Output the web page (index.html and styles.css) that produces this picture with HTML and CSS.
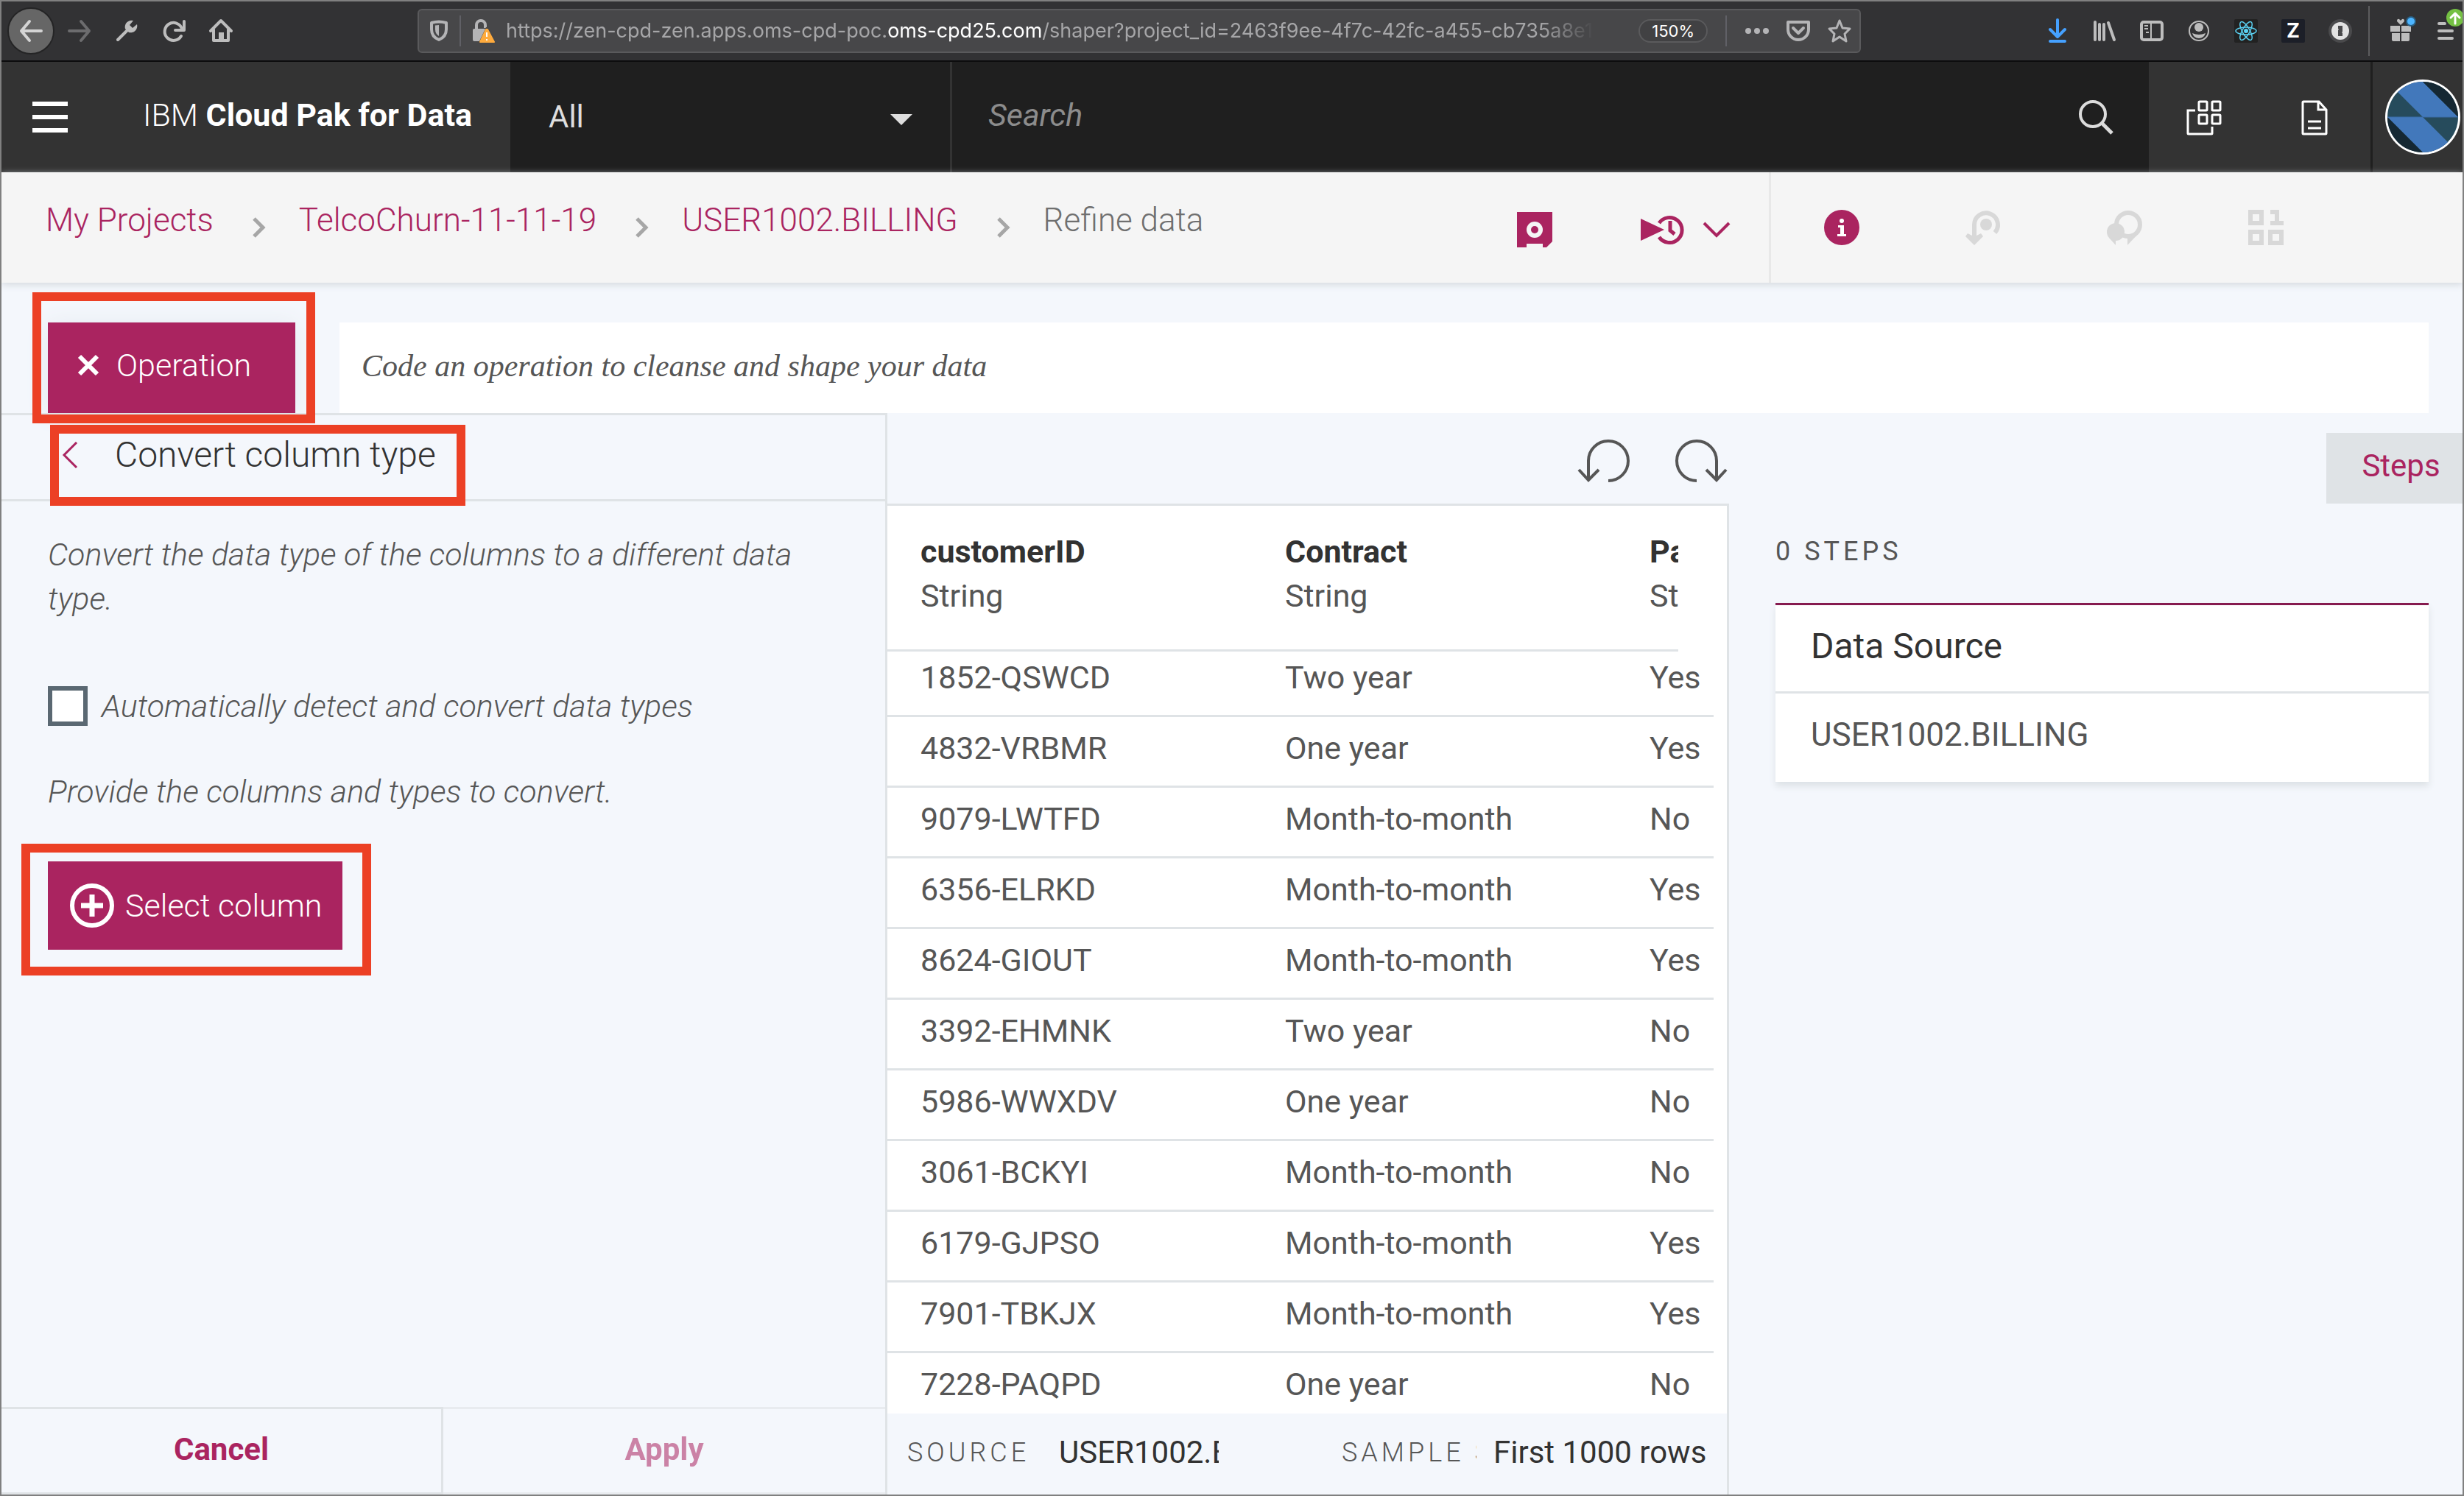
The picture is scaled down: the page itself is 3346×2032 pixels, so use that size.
FILE: index.html
```html
<!DOCTYPE html>
<html lang="en">
<head>
<meta charset="utf-8">
<meta name="viewport" content="width=device-width, initial-scale=1">
<title>Refine data - IBM Cloud Pak for Data</title>
<link rel="stylesheet" href="styles.css">
</head>
<body>
<div class="browser">
  <nav class="browser-group browser-nav" aria-label="Browser">
    <button class="tool tool-back" aria-label="Back"><svg width="32" height="32" viewBox="0 0 32 32"><path d="M30 16H3M14 3L3 16l11 13" fill="none" stroke="#d4d4d4" stroke-width="4" stroke-linecap="round" stroke-linejoin="round"/></svg></button>
    <button class="tool" aria-label="Forward"><svg width="32" height="32" viewBox="0 0 32 32"><path d="M2 16h27M18 3l11 13-11 13" fill="none" stroke="#6c6c6e" stroke-width="4" stroke-linecap="round" stroke-linejoin="round"/></svg></button>
    <button class="tool" aria-label="Tools"><svg width="32" height="32" viewBox="0 0 32 32"><path d="M4 28L18 14" fill="none" stroke="#bdbdbd" stroke-width="4" stroke-linecap="round"/><path d="M25 2a9 9 0 0 0-11 11l5 5A9 9 0 0 0 30 7l-6 5-4-4z" fill="#bdbdbd"/></svg></button>
    <button class="tool" aria-label="Reload"><svg width="32" height="32" viewBox="0 0 32 32"><path d="M27 13A12 12 0 1 0 26 23" fill="none" stroke="#bdbdbd" stroke-width="4" stroke-linecap="round"/><path d="M30 3v12H18" fill="none" stroke="#bdbdbd" stroke-width="4" stroke-linecap="round" stroke-linejoin="round"/></svg></button>
    <button class="tool" aria-label="Home"><svg width="34" height="34" viewBox="0 0 34 34"><path d="M3 17L17 3l14 14M7 15v15h20V15" fill="none" stroke="#bdbdbd" stroke-width="4" stroke-linecap="round" stroke-linejoin="round"/><path d="M14 30V19h7v11" fill="#bdbdbd"/></svg></button>
  </nav>
  <div class="url-bar">
    <svg class="url-shield" width="26" height="30" viewBox="0 0 26 30"><path d="M3 4q10-3 20 0v9q0 10-10 14Q3 23 3 13z" fill="none" stroke="#b4b4b6" stroke-width="4" stroke-linejoin="round"/><path d="M13 7v15Q8 19 8 13V7.500z" fill="#b4b4b6"/></svg>
    <svg class="url-lock" width="32" height="32" viewBox="0 0 32 32"><path d="M7 14V8a6 6 0 0 1 12 0v4" fill="none" stroke="#b4b4b6" stroke-width="4"/><rect x="2" y="13" width="18" height="17" rx="2" fill="#b4b4b6"/><path d="M20 11L10 32h22L22 11z" fill="#474749"/><path d="M20 14h2l9 17H12z" fill="#ffab3d" stroke="#ffab3d" stroke-width="2" stroke-linejoin="round"/><path d="M21 18v6M21 27v2" stroke="#fff" stroke-width="2"/></svg>
    <span class="url-text">https://zen-cpd-zen.apps.oms-cpd-poc.<b>oms-cpd25.com</b>/shaper?project_id=2463f9ee-4f7c-42fc-a455-cb735a8e1</span>
    <span class="url-zoom">150%</span>
    <span class="url-rule"></span>
    <svg width="34" height="32" viewBox="0 0 34 32" fill="#b4b4b6"><circle cx="5" cy="16" r="4"/><circle cx="17" cy="16" r="4"/><circle cx="29" cy="16" r="4"/></svg>
    <svg width="34" height="30" viewBox="0 0 34 30"><path d="M3 3h28v10a14 14 0 0 1-28 0z" fill="none" stroke="#b4b4b6" stroke-width="4" stroke-linejoin="round"/><path d="M10 11l7 7 7-7" fill="none" stroke="#b4b4b6" stroke-width="4" stroke-linecap="round" stroke-linejoin="round"/></svg>
    <svg width="34" height="34" viewBox="0 0 34 34"><path d="M17 3l4 10 10 1-7 7 2 10-9-6-9 6 2-10-7-7 10-1z" fill="none" stroke="#b4b4b6" stroke-width="3" stroke-linejoin="round"/></svg>
  </div>
  <div class="browser-group browser-extras">
    <button class="tool" aria-label="Downloads"><svg width="26" height="34" viewBox="0 0 26 34"><path d="M13 2v22M3 15l10 10 10-10M3 31h20" fill="none" stroke="#45a1ff" stroke-width="4" stroke-linecap="round" stroke-linejoin="round"/></svg></button>
    <button class="tool" aria-label="Library"><svg width="32" height="32" viewBox="0 0 32 32"><path d="M3 4v24M9 7v21M15 7v21M21 5l8 23" fill="none" stroke="#bdbdbd" stroke-width="4" stroke-linecap="round"/></svg></button>
    <button class="tool" aria-label="Sidebar"><svg width="34" height="30" viewBox="0 0 34 30"><rect x="3" y="3" width="28" height="24" rx="3" fill="none" stroke="#bdbdbd" stroke-width="4"/><path d="M16 3v24M7 8h5M7 12h5M9 17h4" stroke="#bdbdbd" stroke-width="2"/></svg></button>
    <button class="tool" aria-label="Account"><svg width="30" height="30" viewBox="0 0 30 30"><circle cx="15" cy="15" r="13" fill="none" stroke="#bdbdbd" stroke-width="2"/><circle cx="15" cy="10" r="6" fill="#bdbdbd"/><path d="M6 18q9 4 18 0-2 7-9 7t-9-7z" fill="#bdbdbd"/></svg></button>
    <button class="tool" aria-label="React tools"><svg width="32" height="32" viewBox="0 0 32 32"><rect width="32" height="32" rx="2" fill="#222"/><g fill="none" stroke="#5ad1f2" stroke-width="1.500"><ellipse cx="16" cy="16" rx="14" ry="5"/><ellipse cx="16" cy="16" rx="14" ry="5" transform="rotate(60 16 16)"/><ellipse cx="16" cy="16" rx="14" ry="5" transform="rotate(120 16 16)"/></g><circle cx="16" cy="16" r="3" fill="#5ad1f2"/></svg></button>
    <button class="tool" aria-label="Z extension"><span class="tool-z">Z</span></button>
    <button class="tool" aria-label="Passwords"><svg width="32" height="32" viewBox="0 0 32 32"><circle cx="16" cy="16" r="16" fill="#4a4a4c"/><circle cx="16" cy="16" r="12" fill="#e2e2e2"/><path d="M13 9h6v8l-1 1 1 1v4h-6v-8l1-1-1-1z" fill="#4a4a4c"/></svg></button>
    <span class="tools-rule"></span>
    <button class="tool" aria-label="What's new"><svg width="42" height="42" viewBox="0 5 42 42"><path d="M7 19h13v8H7zM22 19h13v8H22zM9 29h11v11H11q-2 0-2-2zM22 29h11v9q0 2-2 2h-9z" fill="#bdbdbd"/><path d="M21 18l-5-5q0-4 3-3l2 2 2-2q3-1 3 3z" fill="#bdbdbd"/><circle cx="35" cy="13" r="7" fill="#2a5e80"/><circle cx="35" cy="13" r="5" fill="#4db5ff"/></svg></button>
    <button class="tool tool-menu" aria-label="Menu"><svg width="36" height="46" viewBox="0 0 36 46"><path d="M4 22h8M4 32h18M4 42h18" stroke="#bdbdbd" stroke-width="4" stroke-linecap="round"/><circle cx="26" cy="14" r="14" fill="#323234"/><circle cx="26" cy="14" r="12" fill="#74c043"/><path d="M26 22V8M20 14l6-6 6 6" fill="none" stroke="#fff" stroke-width="3" stroke-linecap="round" stroke-linejoin="round"/></svg></button>
  </div>
</div>

<header class="app-header">
  <div class="brand">
    <button class="burger" aria-label="Open menu"><svg width="48" height="42" viewBox="0 0 48 42"><path d="M0 3h48M0 21h48M0 39h48" stroke="#fff" stroke-width="6"/></svg></button>
    <a class="brand-name" href="#">IBM <b>Cloud Pak for Data</b></a>
  </div>
  <div class="scope">
    <select class="scope-select" aria-label="Search scope"><option>All</option></select>
    <svg class="scope-arrow" width="30" height="15" viewBox="0 0 30 15"><path d="M0 0h30L15 15z" fill="#dedede"/></svg>
  </div>
  <form class="search">
    <input class="search-input" type="search" placeholder="Search" aria-label="Search">
    <button class="icon-button" type="button" aria-label="Search"><svg width="48" height="48" viewBox="0 0 48 48"><circle cx="20" cy="20" r="17" fill="none" stroke="#dcdcdc" stroke-width="4"/><path d="M32 32l14 14" stroke="#dcdcdc" stroke-width="5"/></svg></button>
  </form>
  <div class="header-tools">
    <button class="icon-button" aria-label="Applications"><svg width="48" height="48" viewBox="0 0 48 48"><g fill="none" stroke="#fff" stroke-width="3"><rect x="17" y="2" width="11" height="12" rx="1"/><rect x="35" y="2" width="11" height="12" rx="1"/><rect x="17" y="20" width="11" height="12" rx="1"/><rect x="35" y="20" width="11" height="12" rx="1"/><path d="M12 14H2v31q0 1 1 1h31q1 0 1-1v-9"/></g></svg></button>
    <button class="icon-button" aria-label="Documents"><svg width="36" height="48" viewBox="0 0 36 48"><g fill="none" stroke="#fff" stroke-width="3"><path d="M3 2h21l10 11v32q0 1-1 1H3q-1 0-1-1V3q0-1 1-1zM23 2v11h11M9 29h18M9 38h18"/></g></svg></button>
  </div>
  <div class="account">
    <button class="icon-button" aria-label="Account"><svg width="102" height="102" viewBox="-51 -51 102 102"><clipPath id="disc"><circle r="48"/></clipPath><circle r="51" fill="#fff"/><g clip-path="url(#disc)"><rect x="-48" y="-48" width="96" height="96" fill="#264b5c"/><path d="M0 0l-48-48H0L48 0zM0 0l48 48H0L-48 0z" fill="#4278bb"/><path d="M0-48h48V0zM-48 0v48H0z" fill="#152833"/><path d="M-48 0h96" stroke="#3a6da8" stroke-width="1"/></g></svg></button>
  </div>
</header>

<div class="sub-header">
  <nav class="crumbs" aria-label="Breadcrumb">
    <a class="crumb" href="#">My Projects</a>
    <svg class="crumb-arrow" width="20" height="28" viewBox="0 0 20 28"><path d="M3 2l12 12L3 26" fill="none" stroke="#a6a6a6" stroke-width="5"/></svg>
    <a class="crumb" href="#">TelcoChurn-11-11-19</a>
    <svg class="crumb-arrow" width="20" height="28" viewBox="0 0 20 28"><path d="M3 2l12 12L3 26" fill="none" stroke="#a6a6a6" stroke-width="5"/></svg>
    <a class="crumb" href="#">USER1002.BILLING</a>
    <svg class="crumb-arrow" width="20" height="28" viewBox="0 0 20 28"><path d="M3 2l12 12L3 26" fill="none" stroke="#a6a6a6" stroke-width="5"/></svg>
    <span class="crumb crumb-current">Refine data</span>
  </nav>
  <div class="flow-tools">
    <button class="icon-button" aria-label="Save"><svg width="48" height="48" viewBox="0 0 48 48"><path d="M0 0h48v40l-8 8h-5v-5H13v5H0z" fill="#aa2460"/><circle cx="24" cy="24" r="11" fill="#f5f5f5"/><circle cx="24" cy="24" r="5" fill="#aa2460"/></svg></button>
    <button class="icon-button run-button" aria-label="Run or schedule"><svg width="60" height="40" viewBox="0 0 60 40"><path d="M0 5l32 15L0 35z" fill="#aa2460"/><path d="M25 11a17 17 0 1 1 0 19" fill="none" stroke="#aa2460" stroke-width="5"/><path d="M40 8v13l6 5" fill="none" stroke="#aa2460" stroke-width="5"/></svg><svg width="38" height="24" viewBox="0 0 38 24"><path d="M2 3l17 17L36 3" fill="none" stroke="#aa2460" stroke-width="4"/></svg></button>
  </div>
  <div class="info-tools">
    <button class="icon-button" aria-label="Information"><svg width="48" height="48" viewBox="0 0 48 48"><circle cx="24" cy="24" r="24" fill="#aa2460"/><circle cx="24" cy="15" r="3" fill="#fff"/><path d="M19 21h8v12h3v3H18v-3h4v-9h-3z" fill="#fff"/></svg></button>
    <button class="icon-button" aria-label="Visualizations" disabled><svg width="48" height="48" viewBox="0 0 48 48"><path d="M12 40V20a16 16 0 1 1 28 11" fill="none" stroke="#d8d8d8" stroke-width="6"/><circle cx="28" cy="20" r="8" fill="#d8d8d8"/><path d="M0 36l3-4 6 3h6l6-3 3 4-12 12z" fill="#d8d8d8"/></svg></button>
    <button class="icon-button" aria-label="Comments" disabled><svg width="48" height="48" viewBox="0 0 48 48"><circle cx="29" cy="20" r="16" fill="none" stroke="#d8d8d8" stroke-width="6"/><path d="M44 31L28 48V36z" fill="#d8d8d8"/><circle cx="12" cy="30" r="12" fill="#d8d8d8"/><path d="M3 38l9 10v-7z" fill="#d8d8d8"/></svg></button>
    <button class="icon-button" aria-label="Data" disabled><svg width="48" height="48" viewBox="0 0 48 48"><g fill="none" stroke="#d8d8d8" stroke-width="6"><path d="M3 3h15v15H3zM3 30h15v15H3zM30 30h15v15H30zM30 3h9v15M30 18h18"/></g></svg></button>
  </div>
</div>

<main class="workspace">
  <div class="command-row">
    <div class="marked marked-operation">
      <button class="primary operation-button"><svg width="30" height="30" viewBox="0 0 30 30"><path d="M3 3l24 24M27 3L3 27" stroke="#fff" stroke-width="6"/></svg>Operation</button>
    </div>
    <input class="code-input" type="text" placeholder="Code an operation to cleanse and shape your data" aria-label="Code an operation">
  </div>

  <div class="columns">
    <section class="operation-panel">
      <div class="panel-title marked marked-title">
        <button class="icon-button" aria-label="Back to operations"><svg width="22" height="36" viewBox="0 0 22 36"><path d="M20 1L3 18l17 17" fill="none" stroke="#aa2460" stroke-width="3"/></svg></button>
        <h1>Convert column type</h1>
      </div>
      <div class="panel-body">
        <p class="hint">Convert the data type of the columns to a different data type.</p>
        <label class="check"><input class="check-box" type="checkbox"> Automatically detect and convert data types</label>
        <p class="hint">Provide the columns and types to convert.</p>
        <div class="marked marked-select">
          <button class="primary select-button"><svg width="60" height="60" viewBox="0 0 60 60"><circle cx="30" cy="30" r="27" fill="none" stroke="#fff" stroke-width="6"/><path d="M30 15v30M15 30h30" stroke="#fff" stroke-width="7"/></svg>Select column</button>
        </div>
      </div>
      <div class="panel-actions">
        <button class="action">Cancel</button>
        <button class="action action-apply" disabled>Apply</button>
      </div>
    </section>

    <section class="preview">
      <div class="history">
        <button class="icon-button" aria-label="Undo"><svg width="72" height="60" viewBox="0 0 72 60"><path d="M42 57a27 27 0 1 0-27-27v26M2 42l13 14 14-14" fill="none" stroke="#565656" stroke-width="4"/></svg></button>
        <button class="icon-button" aria-label="Redo"><svg width="72" height="60" viewBox="0 0 72 60"><path d="M30 57a27 27 0 1 1 27-27v26M70 42L57 56 43 42" fill="none" stroke="#565656" stroke-width="4"/></svg></button>
      </div>
      <div class="grid">
        <div class="grid-scroll">
          <table>
            <thead>
              <tr>
                <th scope="col"><div class="col-head">customerID<span>String</span></div></th>
                <th scope="col"><div class="col-head">Contract<span>String</span></div></th>
                <th scope="col"><div class="col-head col-head-cut">Pa<span>St</span></div></th>
              </tr>
            </thead>
            <tbody>
              <tr><td>1852-QSWCD</td><td>Two year</td><td>Yes</td></tr>
              <tr><td>4832-VRBMR</td><td>One year</td><td>Yes</td></tr>
              <tr><td>9079-LWTFD</td><td>Month-to-month</td><td>No</td></tr>
              <tr><td>6356-ELRKD</td><td>Month-to-month</td><td>Yes</td></tr>
              <tr><td>8624-GIOUT</td><td>Month-to-month</td><td>Yes</td></tr>
              <tr><td>3392-EHMNK</td><td>Two year</td><td>No</td></tr>
              <tr><td>5986-WWXDV</td><td>One year</td><td>No</td></tr>
              <tr><td>3061-BCKYI</td><td>Month-to-month</td><td>No</td></tr>
              <tr><td>6179-GJPSO</td><td>Month-to-month</td><td>Yes</td></tr>
              <tr><td>7901-TBKJX</td><td>Month-to-month</td><td>Yes</td></tr>
              <tr><td>7228-PAQPD</td><td>One year</td><td>No</td></tr>
            </tbody>
          </table>
        </div>
        <div class="grid-footer">
          <span class="label source-label">SOURCE</span>
          <span class="value source-value">USER1002.B</span>
          <span class="label sample-label">SAMPLE S</span>
          <span class="value">First 1000 rows</span>
        </div>
      </div>
    </section>

    <aside class="steps">
      <button class="steps-tab">Steps</button>
      <h2 class="label steps-count">0 STEPS</h2>
      <div class="step-card">
        <h3>Data Source</h3>
        <p>USER1002.BILLING</p>
      </div>
    </aside>
  </div>
</main>
</body>
</html>
```

FILE: styles.css
```css
*,
*::before,
*::after {
  box-sizing: border-box;
}

:root {
  --brand: #aa2460;
  --line: #dfe3e6;
  --canvas: #f4f7fc;
  --text: #565656;
  --text-strong: #323232;
  --mark: #ec4025;
}

body {
  display: flex;
  flex-direction: column;
  min-height: 100vh;
  margin: 0;
  border: 2px solid #808080;
  background: var(--canvas);
  color: var(--text);
  font: 42px/60px Roboto, "Liberation Sans", sans-serif;
  overflow-x: hidden;
}

button,
input,
select {
  margin: 0;
  padding: 0;
  border: 0;
  border-radius: 0;
  background: none;
  color: inherit;
  font: inherit;
}

a {
  color: inherit;
  text-decoration: none;
}

h1,
h2,
h3,
p {
  margin: 0;
  font-size: inherit;
  font-weight: 400;
}

svg {
  display: block;
  flex: none;
}

.icon-button {
  display: flex;
  align-items: center;
}

/* Browser toolbar */

.browser {
  display: flex;
  align-items: center;
  justify-content: space-between;
  height: 82px;
  border-bottom: 2px solid #0c0c0d;
  background: #323234;
}

.browser-group {
  display: flex;
  align-items: center;
}

.browser-nav {
  padding-left: 8px;
}

.tool {
  display: flex;
  align-items: center;
  justify-content: center;
  width: 64px;
  height: 64px;
}

.tool-back {
  margin-right: 2px;
  border: 2px solid #242425;
  border-radius: 50%;
  background: #666;
}

.tool-menu {
  justify-content: flex-start;
  align-items: flex-start;
  width: 52px;
  padding-left: 16px;
}

.tool-z {
  width: 32px;
  border-radius: 2px;
  background: #1c1f28;
  color: #fff;
  font: 700 27px/32px Inter, sans-serif;
}

.tools-rule {
  width: 2px;
  height: 68px;
  margin: 0 10px 0 6px;
  background: #5c5c5e;
}

.url-bar {
  display: flex;
  align-items: center;
  width: 1960px;
  height: 60px;
  padding: 0 10px 0 14px;
  border: 2px solid #5a5a5c;
  border-radius: 6px;
  background: #474749;
  color: #a6a6a8;
  font: 27px/40px Inter, sans-serif;
}

.url-lock {
  width: 48px;
  height: 42px;
  margin-left: 15px;
  padding: 5px 0 5px 14px;
  border-left: 2px solid #606066;
}

.url-text {
  flex: 1;
  margin: 0 60px 0 15px;
  overflow: hidden;
  white-space: nowrap;
  -webkit-mask-image: linear-gradient(90deg, #000 95%, transparent);
  mask-image: linear-gradient(90deg, #000 95%, transparent);
}

.url-text b {
  color: #fff;
  font-weight: 400;
}

.url-zoom {
  padding: 0 16px;
  border: 2px solid #5a5a5c;
  border-radius: 16px;
  background: #414143;
  color: #fff;
  font-size: 22px;
  line-height: 28px;
}

.url-rule {
  width: 2px;
  height: 42px;
  margin: 0 24px;
  background: #606066;
}

.url-rule + svg + svg,
.url-rule + svg + svg + svg {
  margin-left: 22px;
}

/* Application header */

.app-header {
  display: flex;
  height: 150px;
  background: #1f1f1f;
  color: #f0f0f0;
}

.brand {
  display: flex;
  align-items: center;
  width: 691px;
  padding-left: 42px;
  gap: 102px;
  background: #333;
}

.brand-name {
  padding-bottom: 6px;
  font-size: 43px;
  font-weight: 300;
  color: #fff;
  white-space: nowrap;
}

.brand-name b {
  font-weight: 700;
}

.scope {
  display: flex;
  align-items: center;
  width: 600px;
  border-right: 3px solid #333;
}

.scope-select {
  flex: 1;
  height: 150px;
  padding-left: 52px;
  appearance: none;
  color: #dedede;
}

.scope-arrow {
  margin: 6px 51px 0 -81px;
  pointer-events: none;
}

.search {
  display: flex;
  flex: 1;
  align-items: center;
  padding: 0 48px 0 49px;
}

.search-input {
  flex: 1;
  height: 150px;
  padding-bottom: 6px;
  font-size: 43px;
}

.search-input::placeholder {
  color: #8c8c8c;
  font-style: italic;
  opacity: 1;
}

.header-tools {
  display: flex;
  align-items: center;
  gap: 108px;
  padding: 2px 58px 0 51px;
  background: #333;
}

.account {
  display: flex;
  align-items: center;
  width: 125px;
  padding-left: 17px;
  border-left: 3px solid #1f1f1f;
  background: #333;
}

/* Breadcrumb bar */

.sub-header {
  position: relative;
  display: flex;
  height: 150px;
  background: #f5f5f5;
  box-shadow: 0 3px 9px #d5dadf;
}

.crumbs {
  display: flex;
  flex: 1;
  align-items: center;
  padding-left: 60px;
}

.crumb {
  padding-bottom: 20px;
  color: var(--brand);
  font-size: 44px;
  font-weight: 300;
  white-space: nowrap;
}

.crumb-current {
  color: #6f6f6f;
}

.crumb-arrow {
  margin: 0 44px 0 52px;
}

.flow-tools {
  display: flex;
  align-items: center;
  gap: 120px;
  padding: 6px 52px 0 0;
  border-right: 3px solid #e8e8e8;
}

.run-button {
  gap: 24px;
}

.info-tools {
  display: flex;
  align-items: center;
  gap: 144px;
  width: 939px;
  padding-left: 72px;
}

/* Command row */

.workspace {
  display: flex;
  flex: 1;
  flex-direction: column;
}

.command-row {
  display: flex;
  gap: 60px;
  padding: 54px 46px 0 63px;
}

.primary {
  display: flex;
  align-items: center;
  background: var(--brand);
  color: #fff;
  font-size: 43px;
  font-weight: 300;
}

.operation-button {
  gap: 23px;
  width: 336px;
  height: 123px;
  padding: 0 0 7px 40px;
  box-shadow: 0 3px 30px #e4e9ef;
}

.code-input {
  flex: 1;
  height: 123px;
  padding: 0 30px 6px;
  background: #fff;
  font-family: "Liberation Serif", serif;
}

.code-input::placeholder {
  color: var(--text);
  font-style: italic;
  opacity: 1;
}

/* Red call-out frames */

.marked {
  position: relative;
}

.marked::after {
  position: absolute;
  z-index: 1;
  border: 12px solid var(--mark);
  content: "";
  pointer-events: none;
}

.marked-operation::after {
  inset: -41px -27px -14px -21px;
}

.marked-title::after {
  top: 13px;
  left: 66px;
  width: 564px;
  height: 110px;
}

.marked-select::after {
  inset: -24px -39px -35px -36px;
}

/* Columns */

.columns {
  display: grid;
  flex: 1;
  grid-template-columns: 1203fr 1143fr 996fr;
}

.operation-panel {
  display: flex;
  flex-direction: column;
  min-width: 0;
}

.panel-title {
  display: flex;
  align-items: center;
  height: 120px;
  padding: 0 0 6px 82px;
  border: 3px solid var(--line);
  border-left: 0;
  color: var(--text-strong);
  font-size: 48px;
}

.panel-title h1 {
  font-weight: 300;
}

.panel-title .icon-button {
  margin-right: 50px;
}

.panel-body {
  display: flex;
  flex: 1;
  flex-direction: column;
  align-items: flex-start;
  padding: 42px 63px 0;
  border-right: 3px solid var(--line);
}

.hint,
.check {
  font-size: 43px;
  font-style: italic;
  font-weight: 300;
}

.check {
  display: flex;
  align-items: center;
  gap: 19px;
  margin: 86px 0 56px;
}

.check-box {
  width: 54px;
  height: 54px;
  border: 6px solid #5a6872;
  background: #fff;
  appearance: none;
}

.marked-select {
  margin-top: 65px;
}

.select-button {
  gap: 15px;
  width: 400px;
  height: 120px;
  padding-left: 30px;
}

.panel-actions {
  display: grid;
  grid-template-columns: 1fr 1fr;
  border-right: 3px solid var(--line);
}

.action {
  height: 119px;
  padding-bottom: 3px;
  border: solid var(--line);
  border-width: 3px 3px 3px 0;
  color: var(--brand);
  font-weight: 700;
}

.action-apply {
  border-right: 0;
  opacity: 0.55;
}

/* Data preview */

.preview {
  display: flex;
  flex-direction: column;
  min-width: 0;
}

.history {
  display: flex;
  justify-content: flex-end;
  gap: 60px;
  height: 123px;
  padding: 6px 2px 0 0;
}

.grid {
  display: flex;
  flex: 1;
  flex-direction: column;
  border: solid var(--line);
  border-width: 3px 3px 0 0;
}

.grid-scroll {
  flex: 1 1 0;
  min-height: 900px;
  padding-right: 18px;
  overflow: hidden;
  background: #fff;
}

table {
  width: 100%;
  border-collapse: separate;
  border-spacing: 0;
  font-size: 43px;
  table-layout: fixed;
}

th,
td {
  padding: 0;
  text-align: left;
  white-space: nowrap;
}

th:nth-child(-n + 2) {
  width: 495px;
}

.col-head {
  height: 198px;
  padding: 32px 0 0 45px;
  border-bottom: 3px solid var(--line);
  color: var(--text-strong);
  overflow: hidden;
}

.col-head span {
  display: block;
  color: var(--text);
  font-weight: 400;
}

.col-head-cut {
  margin-right: 48px;
}

td {
  height: 96px;
  padding: 0 0 21px 45px;
  border-bottom: 3px solid var(--line);
  vertical-align: bottom;
}

tbody tr:first-child td {
  height: 89px;
}

.grid-footer {
  display: flex;
  align-items: center;
  height: 110px;
  padding: 0 0 4px 27px;
  white-space: nowrap;
}

.label {
  font-size: 36px;
  letter-spacing: 5px;
}

.value {
  color: var(--text-strong);
}

.source-label,
.sample-label {
  font-weight: 300;
}

.source-label {
  width: 206px;
}

.source-value {
  width: 217px;
  margin-right: 167px;
  overflow: hidden;
}

.sample-label {
  width: 183px;
  margin-right: 23px;
  overflow: hidden;
}

/* Steps */

.steps {
  display: flex;
  flex-direction: column;
  min-width: 0;
  padding-top: 27px;
}

.steps-tab {
  align-self: flex-end;
  width: 185px;
  height: 96px;
  padding: 0 0 6px 18px;
  background: var(--line);
  color: var(--brand);
}

.steps-count {
  margin: 35px 0 40px 63px;
}

.step-card {
  margin: 0 46px 0 63px;
  border-top: 3px solid #861b4f;
  background: #fff;
  box-shadow: 0 6px 9px #dde2e6;
}

.step-card h3,
.step-card p {
  height: 120px;
  padding: 26px 48px;
  font-size: 44px;
}

.step-card h3 {
  border-bottom: 3px solid var(--line);
  color: var(--text-strong);
  font-size: 48px;
}
```
